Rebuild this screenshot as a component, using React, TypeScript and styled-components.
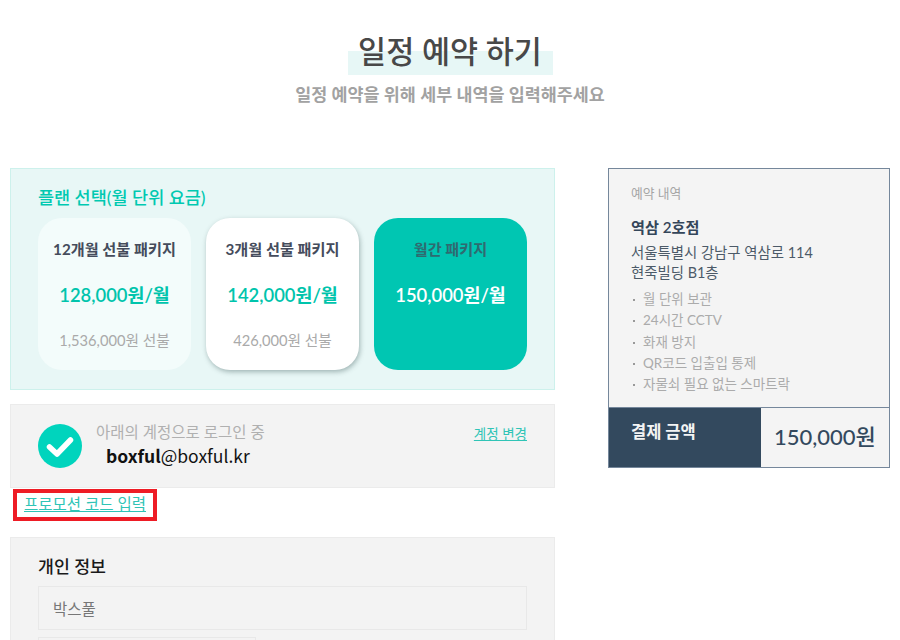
import styled, { createGlobalStyle } from "styled-components";

const GlobalStyle = createGlobalStyle`
  html, body {
    margin: 0;
    padding: 0;
    background: #fff;
  }
  body {
    font-family: Lato, "Noto Sans CJK KR", sans-serif;
    height: 640px;
    overflow: hidden;
  }
  * {
    box-sizing: border-box;
  }
`;

const plans = [
    {name: "12개월 선불 패키지", price: "128,000원/월", total: "1,536,000원 선불", variant: "faded"},
    {name: "3개월 선불 패키지", price: "142,000원/월", total: "426,000원 선불", variant: "raised"},
    {name: "월간 패키지", price: "150,000원/월", total: "", variant: "active"},
] as const;

const features = ["월 단위 보관", "24시간 CCTV", "화재 방지", "QR코드 입출입 통제", "자물쇠 필요 없는 스마트락"];

const CheckIcon = () => (
    <svg width="44" height="44" viewBox="0 0 44 44">
        <circle cx="22" cy="22" r="22" fill="#00d4bd"/>
        <path d="M11.5 23 L19 30 L32.5 16" fill="none" stroke="#fff" strokeWidth="5.5" strokeLinecap="round" strokeLinejoin="round"/>
    </svg>
);

export default function App() {
    return (
        <Page>
            <GlobalStyle/>
            <Header>
                <Title>일정 예약 하기</Title>
                <Subtitle>일정 예약을 위해 세부 내역을 입력해주세요</Subtitle>
            </Header>
            <Columns>
                <LeftColumn>
                    <PlanPanel>
                        <PlanHeading>플랜 선택(월 단위 요금)</PlanHeading>
                        <PlanRow>
                            {plans.map(plan => (
                                <PlanCard key={plan.name} $variant={plan.variant}>
                                    <PlanName $variant={plan.variant}>{plan.name}</PlanName>
                                    <PlanPrice $variant={plan.variant}>{plan.price}</PlanPrice>
                                    <PlanTotal>{plan.total}</PlanTotal>
                                </PlanCard>
                            ))}
                        </PlanRow>
                    </PlanPanel>
                    <AccountPanel>
                        <CheckIcon/>
                        <AccountText>
                            <AccountLabel>아래의 계정으로 로그인 중</AccountLabel>
                            <AccountEmail><b>boxful</b>@boxful.kr</AccountEmail>
                        </AccountText>
                        <ChangeLink>계정 변경</ChangeLink>
                    </AccountPanel>
                    <PromoBox>
                        <PromoLink>프로모션 코드 입력</PromoLink>
                    </PromoBox>
                    <InfoPanel>
                        <InfoHeading>개인 정보</InfoHeading>
                        <Field>박스풀</Field>
                        <ShortField/>
                    </InfoPanel>
                </LeftColumn>
                <Summary>
                    <SummaryBody>
                        <SummaryLabel>예약 내역</SummaryLabel>
                        <BranchName>역삼 2호점</BranchName>
                        <BranchAddress>서울특별시 강남구 역삼로 114<br/>현죽빌딩 B1층</BranchAddress>
                        <FeatureList>
                            {features.map(feature => <Feature key={feature}>{feature}</Feature>)}
                        </FeatureList>
                    </SummaryBody>
                    <TotalRow>
                        <TotalLabel>결제 금액</TotalLabel>
                        <TotalValue>150,000원</TotalValue>
                    </TotalRow>
                </Summary>
            </Columns>
        </Page>
    );
}

type Variant = "faded" | "raised" | "active";

const Page = styled.div`
  width: 900px;
  height: 640px;
  overflow: hidden;
  padding: 0 10px;
`;

const Header = styled.header`
  height: 168px;
  padding-top: 33px;
  display: flex;
  flex-direction: column;
  align-items: center;
`;

const Title = styled.h1`
  margin: 0;
  width: 205px;
  height: 42px;
  font-size: 30.5px;
  line-height: 36px;
  font-weight: 500;
  white-space: nowrap;
  color: #484848;
  text-align: center;
  background: linear-gradient(to bottom, transparent 18px, #e7f7f6 18px);
`;

const Subtitle = styled.p`
  margin: 9px 0 0;
  font-size: 17.4px;
  line-height: 22px;
  font-weight: 600;
  color: #a2a2a2;
`;

const Columns = styled.div`
  display: flex;
  align-items: flex-start;
  justify-content: space-between;
`;

const LeftColumn = styled.div`
  width: 545px;
`;

const PlanPanel = styled.section`
  height: 222px;
  padding: 18px 27px 0;
  background: #e8f7f6;
  border: 1px solid #cdf1ec;
`;

const PlanHeading = styled.h2`
  margin: 0;
  font-size: 17.5px;
  line-height: 22px;
  font-weight: 500;
  color: #00c9b1;
`;

const PlanRow = styled.div`
  margin-top: 9px;
  display: flex;
  justify-content: space-between;
`;

const PlanCard = styled.div<{ $variant: Variant }>`
  width: 153px;
  height: 152px;
  border-radius: 24px;
  display: flex;
  flex-direction: column;
  align-items: center;
  padding-top: 21px;
  background: ${p => p.$variant === "active" ? "#00c6b2" : p.$variant === "raised" ? "#fff" : "#f3fcfb"};
  box-shadow: ${p => p.$variant === "raised" ? "1px 2px 5px rgba(70, 100, 100, 0.45)" : "none"};
`;

const PlanName = styled.div<{ $variant: Variant }>`
  font-size: 15.2px;
  line-height: 20px;
  font-weight: 700;
  white-space: nowrap;
  color: ${p => p.$variant === "active" ? "#2f6a70" : "#454c5c"};
`;

const PlanPrice = styled.div<{ $variant: Variant }>`
  margin-top: 24px;
  font-size: 18.4px;
  line-height: 24px;
  font-weight: 600;
  color: ${p => p.$variant === "active" ? "#fff" : "#00c4ac"};
`;

const PlanTotal = styled.div`
  margin-top: 23px;
  font-size: 14.7px;
  line-height: 20px;
  color: #aaa;
`;

const AccountPanel = styled.section`
  margin-top: 14px;
  height: 84px;
  padding: 19px 27px 0;
  display: flex;
  align-items: flex-start;
  gap: 14px;
  background: #f3f3f3;
  border: 1px solid #ebebeb;
`;

const AccountText = styled.div`
  flex: 1;
  margin-top: -2px;
`;

const AccountLabel = styled.div`
  font-size: 15.5px;
  line-height: 20px;
  color: #b0b0b0;
`;

const AccountEmail = styled.div`
  margin: 2px 0 0 10px;
  font-family: "Noto Sans CJK KR", sans-serif;
  font-size: 17.5px;
  line-height: 24px;
  color: #111;
`;

const ChangeLink = styled.a`
  font-size: 13.5px;
  line-height: 20px;
  color: #2fc4b6;
  text-decoration: underline;
`;

const PromoBox = styled.div`
  margin: 1px 0 0 3px;
  width: 144px;
  height: 32px;
  padding-bottom: 2px;
  border: 4px solid #ee1c25;
  display: flex;
  align-items: center;
  justify-content: center;
`;

const PromoLink = styled.a`
  font-size: 15.5px;
  line-height: 20px;
  white-space: nowrap;
  color: #2fc4b6;
  text-decoration: underline;
`;

const InfoPanel = styled.section`
  margin-top: 16px;
  height: 140px;
  padding: 18px 27px 0;
  background: #f3f3f3;
  border: 1px solid #ebebeb;
`;

const InfoHeading = styled.h3`
  margin: 0;
  font-size: 17.3px;
  line-height: 22px;
  font-weight: 500;
  color: #1a1a1a;
`;

const Field = styled.div`
  margin-top: 8px;
  height: 44px;
  padding-left: 14px;
  display: flex;
  align-items: center;
  font-size: 15.5px;
  color: #777;
  background: #f3f3f3;
  border: 1px solid #e8e8e8;
`;

const ShortField = styled(Field)`
  margin-top: 7px;
  width: 218px;
`;

const Summary = styled.aside`
  width: 282px;
  height: 300px;
  display: flex;
  flex-direction: column;
  background: #f4f4f4;
  border: 1px solid #75879b;
`;

const SummaryBody = styled.div`
  flex: 1;
  padding: 15px 22px 0;
`;

const SummaryLabel = styled.div`
  font-size: 12.8px;
  line-height: 18px;
  color: #a5a5a5;
`;

const BranchName = styled.div`
  margin-top: 15px;
  font-size: 15.2px;
  line-height: 20px;
  font-weight: 600;
  color: #34465a;
`;

const BranchAddress = styled.div`
  margin-top: 6px;
  font-size: 14.4px;
  line-height: 19.5px;
  color: #4c5a68;
`;

const FeatureList = styled.ul`
  margin: 7px 0 0;
  padding: 0;
  list-style: none;
`;

const Feature = styled.li`
  position: relative;
  padding-left: 12px;
  font-size: 13.5px;
  line-height: 21.3px;
  color: #ababab;
  &::before {
    content: "";
    position: absolute;
    left: 2px;
    top: 10px;
    width: 2px;
    height: 2px;
    background: #999;
  }
`;

const TotalRow = styled.div`
  height: 60px;
  display: flex;
  border-top: 1px solid #75879b;
`;

const TotalLabel = styled.div`
  width: 152px;
  padding: 13px 0 0 22px;
  font-size: 16.5px;
  line-height: 22px;
  font-weight: 700;
  color: #f4f4f4;
  background: #33495e;
`;

const TotalValue = styled.div`
  flex: 1;
  padding: 14px 0 0 13px;
  font-size: 22px;
  line-height: 30px;
  font-weight: 500;
  color: #33495e;
`;
